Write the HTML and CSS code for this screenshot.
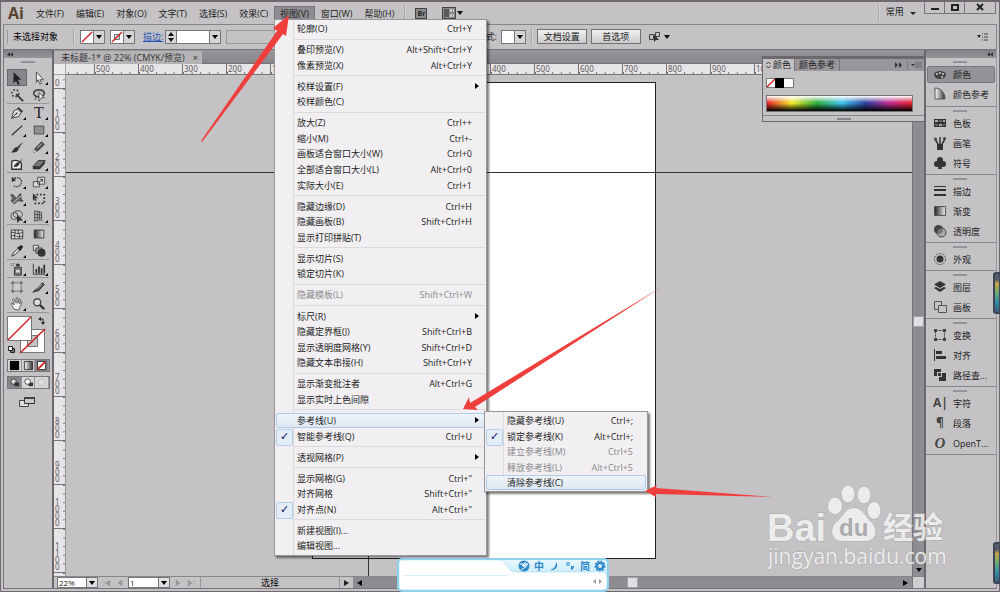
FILE: index.html
```html
<!DOCTYPE html>
<html lang="zh-CN">
<head>
    <meta charset="UTF-8">
    <meta name="viewport" content="width=device-width, initial-scale=1.0">
    <title>未标题-1* @ 22% (CMYK/预览)</title>
    <link rel="stylesheet" href="styles.css">
</head>
<body>
    <div class="app">
        <header class="menubar">
            <div class="logo">Ai</div>
            <nav class="menus">
                <button>文件(F)</button>
                <button>编辑(E)</button>
                <button>对象(O)</button>
                <button>文字(T)</button>
                <button>选择(S)</button>
                <button>效果(C)</button>
                <button class="open">视图(V)</button>
                <button>窗口(W)</button>
                <button>帮助(H)</button>
            </nav>
            <span class="divider"></span>
            <button class="bridge">Br</button>
            <button class="arrange" aria-label="排列文档">
                <svg width="21" height="12" viewBox="0 0 21 12"><rect x="0.5" y="0.5" width="13" height="11" fill="#8b898c" stroke="#444"/><path d="M2 2h5v8H2z" fill="#5b595c"/><path d="M8 2h2v3H8zM11 2h1v3h-1zM8 7h2v3H8zM11 7h1v3h-1z" fill="#ccc"/><path d="M15 4h6l-3 4z" fill="#111"/></svg>
            </button>
            <div class="spacer"></div>
            <span class="divider"></span>
            <button class="workspace">常用 <i class="caret"></i></button>
            <div class="window-buttons">
                <button aria-label="最小化"><svg width="10" height="10" viewBox="0 0 10 10"><path d="M1 6h8v2H1z" fill="#222"/></svg></button>
                <button aria-label="最大化"><svg width="10" height="10" viewBox="0 0 10 10"><path d="M2 3h6v5H2z" fill="none" stroke="#222" stroke-width="2"/></svg></button>
                <button class="close" aria-label="关闭"><svg width="10" height="10" viewBox="0 0 10 10"><path d="M2 2l6 6M8 2l-6 6" stroke="#222" stroke-width="2"/></svg></button>
            </div>
        </header>

        <section class="control-bar">
            <span class="grip-v"></span>
            <span class="status">未选择对象</span>
            <span class="divider"></span>
            <button class="swatch-combo" aria-label="填色"><svg width="12" height="12" viewBox="0 0 12 12"><path d="M0 0h12v12H0z" fill="#fff"/><path d="M1 11L11 1" stroke="#c22" stroke-width="1.5"/></svg><i class="drop"></i></button>
            <button class="swatch-combo" aria-label="描色"><svg width="12" height="12" viewBox="0 0 12 12"><path d="M0 0h12v12H0z" fill="#fff"/><path d="M3.500 3.500h5v5h-5z" fill="#ddd" stroke="#777"/><path d="M1 11L11 1" stroke="#c22" stroke-width="1.500"/></svg><i class="drop"></i></button>
            <a href="#" class="stroke-link">描边:</a>
            <div class="stepper">
                <button class="step" aria-label="增减"><svg width="10" height="12" viewBox="0 0 10 12"><path d="M5 1l3 4H2zM5 11l3-4H2z" fill="#111"/></svg></button>
                <input type="text" aria-label="描边粗细">
                <i class="drop"></i>
            </div>
            <input type="text" class="profile" aria-label="画笔定义" disabled>
            <span class="style-label">样式:</span>
            <button class="swatch-combo style-combo" aria-label="图形样式"><svg width="12" height="12" viewBox="0 0 12 12"><path d="M0 0h12v12H0z" fill="#fff"/></svg><i class="drop"></i></button>
            <span class="divider"></span>
            <button class="push">文档设置</button>
            <button class="push">首选项</button>
            <button class="similar" aria-label="选择类似的对象">
                <svg width="22" height="12" viewBox="0 0 22 12"><path d="M1.500 3.500h4v5h-4zM7.500 1.500h4v4h-4z" fill="none" stroke="#444"/><path d="M6 3l5 6-3 0-2 2z" fill="#333"/><path d="M16 4h6l-3 4z" fill="#111"/></svg>
            </button>
            <div class="spacer"></div>
            <button class="flyout" aria-label="面板菜单"><svg width="11" height="8" viewBox="0 0 11 8"><path d="M0 2h4L2 5z" fill="#222"/><path d="M5 1h1M7 1h4M5 4h1M7 4h4M5 7h1M7 7h4" stroke="#444"/></svg></button>
        </section>

        <main class="workspace-area">
            <aside class="tools">
                <div class="dock-head left"><svg width="6" height="5" viewBox="0 0 8 6"><path d="M4 0v6L0 3zM8 0v6L4 3z" fill="#333"/></svg></div>
                <span class="grip"></span>
                <div class="tool-group">
                    <button class="active" aria-label="选择工具"><svg viewBox="0 0 16 16"><path d="M4 1l9 9H9l2 5-2 1-2-5-3 3z" fill="#222"/></svg></button>
                    <button class="more" aria-label="直接选择工具"><svg viewBox="0 0 16 16"><path d="M5 1l8 9H9l2 4-2 1-2-5-2 3z" fill="#eee" stroke="#444"/></svg></button>
                    <button aria-label="魔棒工具"><svg viewBox="0 0 16 16"><circle cx="6" cy="6" r="4" fill="none" stroke="#444" stroke-width="2" stroke-dasharray="2 2"/><path d="M7 7l8 8" stroke="#333" stroke-width="2"/></svg></button>
                    <button aria-label="套索工具"><svg viewBox="0 0 16 16"><ellipse cx="8" cy="6" rx="6" ry="4" fill="none" stroke="#444" stroke-width="2"/><path d="M3 9c2 1 2 3 0 5" fill="none" stroke="#444"/><path d="M8 5l6 6-3 0-3 4z" fill="#eee" stroke="#444"/></svg></button>
                </div>
                <div class="tool-group">
                    <button class="more" aria-label="钢笔工具"><svg viewBox="0 0 16 16"><path d="M2 14l2-8 5-3 4 4-3 5z" fill="#ddd" stroke="#333"/><path d="M2 14l5-5" stroke="#333"/><circle cx="7.500" cy="8.500" r="1" fill="#333"/><path d="M10 1l5 5-2 2-5-5z" fill="#444"/></svg></button>
                    <button class="more type" aria-label="文字工具">T</button>
                    <button class="more" aria-label="直线段工具"><svg viewBox="0 0 16 16"><path d="M2 14L14 3" stroke="#333" stroke-width="1.500"/></svg></button>
                    <button class="more" aria-label="矩形工具"><svg viewBox="0 0 16 16"><path d="M2.500 3.500h11v9h-11z" fill="#929094" stroke="#444"/></svg></button>
                    <button aria-label="画笔工具"><svg viewBox="0 0 16 16"><path d="M15 2L8 8l2 2z" fill="#444"/><path d="M8 8l2 2c-1 4-5 5-9 4 3-1 3-6 7-6z" fill="#333"/></svg></button>
                    <button class="more" aria-label="铅笔工具"><svg viewBox="0 0 16 16"><path d="M2 14l2-5 7-7 3 3-7 7z" fill="#555" stroke="#333"/><path d="M6 9l5-5" stroke="#ccc"/><path d="M2 14l1-3 2 2z" fill="#eee"/></svg></button>
                    <button aria-label="斑点画笔工具"><svg viewBox="0 0 16 16"><path d="M2 5c3-2 9-1 11 2v7H2z" fill="#eee" stroke="#333" stroke-width="1.500"/><path d="M15 1l-5 5c-3 0-4 2-6 5 4 1 6-1 7-4z" fill="#333"/></svg></button>
                    <button class="more" aria-label="橡皮擦工具"><svg viewBox="0 0 16 16"><path d="M1 11l6-7h8l-6 7z" fill="#777" stroke="#333"/><path d="M1 11h8v3H1zM9 11l6-7v3l-6 7z" fill="#333"/></svg></button>
                </div>
                <div class="tool-group">
                    <button class="more" aria-label="旋转工具"><svg viewBox="0 0 16 16"><path d="M5 4c5-3 9 1 8 5s-6 6-9 3" fill="none" stroke="#444" stroke-width="1.500" stroke-dasharray="2 1"/><path d="M2 2v6l5-2z" fill="#333"/></svg></button>
                    <button class="more" aria-label="比例缩放工具"><svg viewBox="0 0 16 16"><path d="M1.500 7.500h7v6h-7zM6.500 2.500h8v8h-8z" fill="#ddd" stroke="#444"/><path d="M8 9l4-4M9 5h3v3" fill="none" stroke="#333"/></svg></button>
                    <button class="more" aria-label="宽度工具"><svg viewBox="0 0 16 16"><path d="M1 3c5 0 4 3 6 4s3-5 5-5-2 6 3 8c-3 2-4-1-6 0s-3 4-5 3-1-3-3-3c3-2 2-3 0-7z" fill="#666" stroke="#333"/><path d="M3 13L13 4" stroke="#ddd"/></svg></button>
                    <button aria-label="自由变换工具"><svg viewBox="0 0 16 16"><path d="M5 3h9v10H4V8" fill="none" stroke="#333" stroke-width="2" stroke-dasharray="2 2"/><path d="M1 1l6 6H4l-3 3z" fill="#333"/></svg></button>
                    <button class="more" aria-label="形状生成器工具"><svg viewBox="0 0 16 16"><circle cx="5" cy="8" r="4" fill="#ccc" stroke="#444"/><ellipse cx="9" cy="6" rx="5" ry="4" fill="none" stroke="#444"/><path d="M8 6l7 7h-4l-3 3z" fill="#333"/></svg></button>
                    <button class="more" aria-label="透视网格工具"><svg viewBox="0 0 16 16"><path d="M3 2v12M3 2l8 2v8l-8 2M3 6l8 1M3 10h8M6 3v10M8.500 3v10" fill="none" stroke="#444"/><path d="M11 12l4 2H4z" fill="#999"/></svg></button>
                </div>
                <div class="tool-group">
                    <button aria-label="网格工具"><svg viewBox="0 0 16 16"><path d="M1.500 3.500h13v10h-13z" fill="#ddd" stroke="#333"/><path d="M1 7c4-3 5 3 14-1M1 11c5-4 8 3 14-1M5 3c3 4-2 6 1 10M10 3c-3 4 4 6 0 10" fill="none" stroke="#333"/></svg></button>
                    <button aria-label="渐变工具"><svg viewBox="0 0 16 16"><defs><linearGradient id="g"><stop offset="0" stop-color="#222"/><stop offset="1" stop-color="#eee"/></linearGradient></defs><path d="M2.500 3.500h11v9h-11z" fill="url(#g)" stroke="#333"/></svg></button>
                    <button class="more" aria-label="吸管工具"><svg viewBox="0 0 16 16"><path d="M2 14l2-4 5-5 2 2-5 5z" fill="#ddd" stroke="#333"/><path d="M8 4l2-1 3-2 2 2-2 3-1 2z" fill="#222"/></svg></button>
                    <button aria-label="混合工具"><svg viewBox="0 0 16 16"><path d="M1.500 1.500h6v6h-6z" fill="#ddd" stroke="#444"/><path d="M4.500 4.500h7v6h-7z" fill="#999" stroke="#444"/><circle cx="11" cy="10" r="4.500" fill="#333"/></svg></button>
                </div>
                <div class="tool-group">
                    <button class="more" aria-label="符号喷枪工具"><svg viewBox="0 0 16 16"><path d="M5 6h8v9H5z" fill="#777" stroke="#333"/><path d="M7 2h4v3H7z" fill="#333"/><path d="M1 2h5M1 4h4" stroke="#555" stroke-dasharray="1 1"/><path d="M7 9h4v3H7z" fill="#ddd"/></svg></button>
                    <button class="more" aria-label="柱形图工具"><svg viewBox="0 0 16 16"><path d="M1.500 2v12H15" fill="none" stroke="#333"/><path d="M4 8h2v5H4zM7 5h2v8H7zM10 7h2v6h-2zM13 3h2v10h-2z" fill="#333"/></svg></button>
                </div>
                <div class="tool-group">
                    <button aria-label="画板工具"><svg viewBox="0 0 16 16"><path d="M3.500 1v14M12.500 1v14M1 3.500h14M1 12.500h14" stroke="#444"/><path d="M4 4h8v8H4z" fill="#ccc"/></svg></button>
                    <button class="more" aria-label="切片工具"><svg viewBox="0 0 16 16"><path d="M1 14L12 3l2 2-6 7z" fill="#555" stroke="#333"/><path d="M5 10l6-5" stroke="#ddd"/></svg></button>
                    <button class="more" aria-label="抓手工具"><svg viewBox="0 0 16 16"><path d="M5 14L1 8l1-1 3 2-2-6 1-1 3 5V1h2v6l2-5 1 1-1 5 2-3 1 1-3 6-1 3z" fill="#eee" stroke="#555"/></svg></button>
                    <button aria-label="缩放工具"><svg viewBox="0 0 16 16"><circle cx="6" cy="6" r="4" fill="#ddd" stroke="#444" stroke-width="1.500"/><path d="M9 9l5 5" stroke="#333" stroke-width="2.500"/></svg></button>
                </div>
                <svg class="fill-stroke" width="40" height="39" viewBox="0 0 40 39">
                    <path d="M13.500 13.500h24v23h-24z" fill="#fff" stroke="#777"/><path d="M20.500 19.500h10v11h-10z" fill="#c4c2c5" stroke="#777"/><path d="M13 37L38 13" stroke="#c22" stroke-width="1.500"/>
                    <path d="M.500.500h24v24H.500z" fill="#fff" stroke="#777"/><path d="M1 24L24 1" stroke="#c22" stroke-width="1.500"/>
                    <path d="M33 3h3v4" fill="none" stroke="#222"/><path d="M34 1v4l-3-2zM34 6h4l-2 3z" fill="#222"/>
                    <path d="M3.500 32.500h4v4h-4z" fill="#777" stroke="#222"/><path d="M1.500 30.500h4v4h-4z" fill="#fff" stroke="#222"/>
                </svg>
                <div class="mode-row">
                    <button aria-label="颜色"><svg viewBox="0 0 12 12"><path d="M1 1h10v10H1z" fill="#000"/></svg></button>
                    <button aria-label="渐变"><svg viewBox="0 0 12 12"><defs><linearGradient id="g2"><stop offset="0" stop-color="#fff"/><stop offset="1" stop-color="#333"/></linearGradient></defs><path d="M1.500 1.500h9v9h-9z" fill="url(#g2)" stroke="#333"/></svg></button>
                    <button class="active" aria-label="无"><svg viewBox="0 0 12 12"><path d="M1.500 1.500h9v9h-9z" fill="#fff" stroke="#222"/><path d="M2 10l8-8" stroke="#c22" stroke-width="2"/></svg></button>
                </div>
                <div class="mode-row draw">
                    <button class="active" aria-label="正常绘图"><svg viewBox="0 0 12 12"><circle cx="5" cy="5" r="3" fill="#ddd" stroke="#333"/><path d="M6 6h5v4H6z" fill="#333"/></svg></button>
                    <button aria-label="背面绘图"><svg viewBox="0 0 12 12"><path d="M6 6h5v4H6z" fill="#333"/><circle cx="5" cy="5" r="3" fill="#fff" stroke="#444"/></svg></button>
                    <button aria-label="内部绘图" disabled><svg viewBox="0 0 12 12"><circle cx="6" cy="6" r="3.500" fill="#ddd" stroke="#aaa" stroke-dasharray="2 1"/></svg></button>
                </div>
                <button class="screen-mode" aria-label="更改屏幕模式"><svg width="16" height="12" viewBox="0 0 16 12"><path d="M.500 4.500h9v6h-9z" fill="#ddd" stroke="#444"/><path d="M5.500 1.500h10v6h-10z" fill="#ccc" stroke="#333"/><path d="M5 1h11v2H5z" fill="#444"/></svg></button>
            </aside>

            <section class="document">
                <div class="tabs">
                    <div class="tab">未标题-1* @ 22% (CMYK/预览)<button aria-label="关闭标签">×</button></div>
                </div>
                <div class="doc-grid">
                    <div class="ruler-corner"></div>
                    <div class="ruler-h"><div class="strip" id="rulerH"></div></div>
                    <div class="ruler-v"><div class="strip" id="rulerV"></div></div>
                    <div class="canvas">
                        <div class="artboard"></div>
                        <div class="guide horizontal"></div>
                        <div class="guide vertical"></div>
                    </div>
                    <div class="scroll-v"><span class="thumb"></span><svg width="8" height="5" viewBox="0 0 8 5"><path d="M1 0h6L4 4z" fill="#000"/></svg></div>
                </div>
                <footer class="status-bar">
                    <span class="combo zoom-box"><select aria-label="缩放"><option>22%</option></select></span>
                    <svg class="pager" width="20" height="6" viewBox="0 0 20 6"><path d="M1 0v6M7 0v6L2 3zM19 0v6l-4-3z" fill="#98969a" stroke="#98969a" stroke-width=".500"/></svg>
                    <span class="combo page-box"><select aria-label="画板"><option>1</option></select></span>
                    <svg class="pager" width="20" height="6" viewBox="0 0 20 6"><path d="M1 0v6l4-3zM13 0v6l4-3zM19 0v6" fill="#98969a" stroke="#98969a" stroke-width=".500"/></svg>
                    <span class="tool-name">选择</span>
                    <button class="status-more" aria-label="状态菜单"><svg width="5" height="6" viewBox="0 0 5 6"><path d="M0 0v6l5-3z" fill="#222"/></svg></button>
                    <div class="scroll-h">
                        <svg width="5" height="8" viewBox="0 0 5 8"><path d="M5 1v6L0 4z" fill="#000"/></svg>
                        <span class="thumb"></span>
                        <svg width="5" height="8" viewBox="0 0 5 8"><path d="M0 1v6l5-3z" fill="#000"/></svg>
                    </div>
                    <span class="corner"></span>
                </footer>
            </section>

            <aside class="dock">
                <div class="dock-head"><svg width="6" height="5" viewBox="0 0 8 6"><path d="M4 0v6L0 3zM8 0v6L4 3z" fill="#333"/></svg></div>
                <div class="dock-group first">
                    <button class="active"><svg viewBox="0 0 14 14"><ellipse cx="7" cy="7" rx="6" ry="4" fill="#444"/><circle cx="4" cy="6" r="1" fill="#ccc"/><circle cx="7" cy="5" r="1" fill="#ccc"/><circle cx="10" cy="6" r="1" fill="#ccc"/><circle cx="9" cy="9" r="1" fill="#ccc"/></svg>颜色</button>
                    <button><svg viewBox="0 0 14 14"><path d="M2 1c6 0 10 5 10 11H2z" fill="url(#g2)" stroke="#555"/></svg>颜色参考</button>
                </div>
                <div class="dock-group">
                    <button><svg viewBox="0 0 14 14"><path d="M1 3h12v8H1z" fill="#333"/><path d="M2 4h3v2H2zM10 4h2v2h-2zM6 8h3v2H6z" fill="#aaa"/><path d="M6 4h3v2H6zM2 8h3v2H2zM10 8h2v2h-2z" fill="#666"/></svg>色板</button>
                    <button><svg viewBox="0 0 14 14"><path d="M4 8h6v6H4z" fill="#333"/><path d="M5 8L2 3M7 8V1M9 8l3-5" stroke="#333" stroke-width="1.500"/><circle cx="2.500" cy="3" r="1.500" fill="#444"/><circle cx="11.500" cy="2.500" r="1.500" fill="#444"/></svg>画笔</button>
                    <button><svg viewBox="0 0 14 14"><circle cx="7" cy="4" r="3" fill="#333"/><circle cx="4" cy="8" r="3" fill="#333"/><circle cx="10" cy="8" r="3" fill="#333"/><path d="M6 7h2l1 6H5z" fill="#333"/></svg>符号</button>
                </div>
                <div class="dock-group">
                    <button><svg viewBox="0 0 14 14"><path d="M1 2.500h12" stroke="#333"/><path d="M1 6h12" stroke="#333" stroke-width="2"/><path d="M1 11h12" stroke="#333" stroke-width="2"/></svg>描边</button>
                    <button><svg viewBox="0 0 14 14"><path d="M1.500 2.500h11v9h-11z" fill="url(#g)" stroke="#555"/></svg>渐变</button>
                    <button><svg viewBox="0 0 14 14"><circle cx="5.500" cy="5.500" r="4.500" fill="#444"/><circle cx="8.500" cy="8.500" r="4.500" fill="#999" fill-opacity=".6" stroke="#444"/></svg>透明度</button>
                </div>
                <div class="dock-group">
                    <button><svg viewBox="0 0 14 14"><circle cx="7" cy="7" r="5.500" fill="none" stroke="#555" stroke-dasharray="2 1"/><circle cx="7" cy="7" r="3.500" fill="#333"/></svg>外观</button>
                </div>
                <div class="dock-group">
                    <button><svg viewBox="0 0 14 14"><path d="M7 1l6 3.500L7 8 1 4.500z" fill="#333"/><path d="M1 8l2-1 4 2 4-2 2 1-6 4z" fill="#333"/></svg>图层</button>
                    <button><svg viewBox="0 0 14 14"><path d="M1.500 1.500h7v8h-7z" fill="none" stroke="#555"/><path d="M5.500 5.500h8v7h-8z" fill="#c4c2c5" stroke="#555"/></svg>画板</button>
                </div>
                <div class="dock-group">
                    <button><svg viewBox="0 0 14 14"><path d="M2.500 2.500h9v9h-9z" fill="none" stroke="#444" stroke-dasharray="2 1"/><path d="M1 1h3v3H1zM10 1h3v3h-3zM1 10h3v3H1zM10 10h3v3h-3z" fill="#444"/></svg>变换</button>
                    <button><svg viewBox="0 0 14 14"><path d="M1.500 1v12" stroke="#333"/><path d="M3 3h6v3H3zM3 8h10v3H3z" fill="#333"/></svg>对齐</button>
                    <button><svg viewBox="0 0 14 14"><path d="M1 1h7v3H4v4H1zM5 5h3v3H5zM9 5h4v8H6V9h3z" fill="#333"/></svg>路径查...</button>
                </div>
                <div class="dock-group last">
                    <button><span class="glyph">A|</span>字符</button>
                    <button><span class="glyph">¶</span>段落</button>
                    <button><span class="glyph italic">O</span>OpenT...</button>
                </div>
            </aside>
        </main>
    </div>

    <section class="color-panel">
        <div class="panel-tabs">
            <button class="current"><svg width="5" height="8" viewBox="0 0 5 8"><path d="M.500 3l2-2 2 2M.500 5l2 2 2-2" fill="none" stroke="#333"/></svg>颜色</button>
            <button>颜色参考</button>
            <svg class="panel-icons" width="27" height="8" viewBox="0 0 27 8"><path d="M0 1v6l3-3zM4 1v6l3-3z" fill="#333"/><path d="M12.500 0v8" stroke="#777"/><path d="M16 3h4l-2 2z" fill="#333"/><path d="M20 2h7M20 4h7M20 6h7" stroke="#666"/></svg>
        </div>
        <div class="panel-body">
            <svg width="28" height="10" viewBox="0 0 28 10"><path d="M.500.500h27v9H.500z" fill="#fff" stroke="#777"/><path d="M1 9l8-8" stroke="#c22" stroke-width="1.500"/><path d="M9 0h9v10H9z" fill="#000"/></svg>
            <div class="spectrum"></div>
        </div>
        <div class="panel-foot"></div>
    </section>

    <ul class="popup view-menu">
        <li><button>轮廓(O)<kbd>Ctrl+Y</kbd></button></li>
        <li class="sep"></li>
        <li><button>叠印预览(V)<kbd>Alt+Shift+Ctrl+Y</kbd></button></li>
        <li><button>像素预览(X)<kbd>Alt+Ctrl+Y</kbd></button></li>
        <li class="sep"></li>
        <li class="parent"><button>校样设置(F)</button></li>
        <li><button>校样颜色(C)</button></li>
        <li class="sep"></li>
        <li><button>放大(Z)<kbd>Ctrl++</kbd></button></li>
        <li><button>缩小(M)<kbd>Ctrl+-</kbd></button></li>
        <li><button>画板适合窗口大小(W)<kbd>Ctrl+0</kbd></button></li>
        <li><button>全部适合窗口大小(L)<kbd>Alt+Ctrl+0</kbd></button></li>
        <li><button>实际大小(E)<kbd>Ctrl+1</kbd></button></li>
        <li class="sep"></li>
        <li><button>隐藏边缘(D)<kbd>Ctrl+H</kbd></button></li>
        <li><button>隐藏画板(B)<kbd>Shift+Ctrl+H</kbd></button></li>
        <li><button>显示打印拼贴(T)</button></li>
        <li class="sep"></li>
        <li><button>显示切片(S)</button></li>
        <li><button>锁定切片(K)</button></li>
        <li class="sep"></li>
        <li><button disabled>隐藏模板(L)<kbd>Shift+Ctrl+W</kbd></button></li>
        <li class="sep"></li>
        <li class="parent"><button>标尺(R)</button></li>
        <li><button>隐藏定界框(J)<kbd>Shift+Ctrl+B</kbd></button></li>
        <li><button>显示透明度网格(Y)<kbd>Shift+Ctrl+D</kbd></button></li>
        <li><button>隐藏文本串接(H)<kbd>Shift+Ctrl+Y</kbd></button></li>
        <li class="sep"></li>
        <li><button>显示渐变批注者<kbd>Alt+Ctrl+G</kbd></button></li>
        <li><button>显示实时上色间隙</button></li>
        <li class="sep"></li>
        <li class="parent hover"><button>参考线(U)</button></li>
        <li class="checked"><button>智能参考线(Q)<kbd>Ctrl+U</kbd></button></li>
        <li class="sep"></li>
        <li class="parent"><button>透视网格(P)</button></li>
        <li class="sep"></li>
        <li><button>显示网格(G)<kbd>Ctrl+"</kbd></button></li>
        <li><button>对齐网格<kbd>Shift+Ctrl+"</kbd></button></li>
        <li class="checked"><button>对齐点(N)<kbd>Alt+Ctrl+"</kbd></button></li>
        <li class="sep"></li>
        <li><button>新建视图(I)...</button></li>
        <li><button>编辑视图...</button></li>
    </ul>

    <ul class="popup guide-menu">
        <li><button>隐藏参考线(U)<kbd>Ctrl+;</kbd></button></li>
        <li class="checked"><button>锁定参考线(K)<kbd>Alt+Ctrl+;</kbd></button></li>
        <li><button disabled>建立参考线(M)<kbd>Ctrl+5</kbd></button></li>
        <li><button disabled>释放参考线(L)<kbd>Alt+Ctrl+5</kbd></button></li>
        <li class="hover"><button>清除参考线(C)</button></li>
    </ul>

    <div class="ime">
        <svg class="ime-shape" width="212" height="34" viewBox="0 0 212 34">
            <defs><linearGradient id="sky" x2="0" y2="1"><stop offset="0" stop-color="#eaf8ff"/><stop offset="1" stop-color="#a5dcf8"/></linearGradient></defs>
            <rect x="1" y="1" width="210" height="32" rx="4" fill="url(#sky)" stroke="#8fd0ec" stroke-width="2"/>
            <path d="M2 5q0-3 3-3h97c8 0 8 12 16 12h88q4 0 4 4v10q0 4-4 4H5q-3 0-3-3z" fill="#fff" stroke="#9bd3ee" stroke-width=".500"/>
            <path d="M6 17.500h105" stroke="#d9effa"/>
            <path d="M199 21v5l-3-2.500zM202 21v5l3-2.500z" fill="#999"/>
        </svg>
        <div class="ime-tools">
            <svg viewBox="0 0 12 12"><circle cx="6" cy="6" r="5.500" fill="#2f88c9"/><path d="M2 4h8L5 6 9 6 3 10M8 2L4 6" fill="none" stroke="#fff"/></svg>
            <span>中</span>
            <svg viewBox="0 0 12 12"><path d="M8 2c3 4 0 9-6 8 4-1 6-4 6-8z" fill="#2f88c9"/></svg>
            <svg viewBox="0 0 12 12"><circle cx="4" cy="4" r="1.500" fill="none" stroke="#2f88c9"/><path d="M7 6h3q0 3-3 4z" fill="#2f88c9"/></svg>
            <span>简</span>
            <svg viewBox="0 0 12 12"><circle cx="6" cy="6" r="4.500" fill="none" stroke="#2f88c9" stroke-width="2" stroke-dasharray="2 1"/><circle cx="6" cy="6" r="3" fill="none" stroke="#2f88c9" stroke-width="2"/></svg>
        </div>
    </div>

    <span class="gadget upper"></span>
    <span class="gadget lower"></span>

    <svg class="watermark" width="190" height="92" viewBox="0 0 190 92">
        <g fill="#f4f4f4" stroke="#a9a7aa" stroke-width="1" paint-order="stroke">
            <text x="3" y="59" class="wm-name">Bai</text>
            <ellipse cx="71" cy="24" rx="7" ry="8.500"/>
            <ellipse cx="84" cy="12" rx="6.500" ry="8.500"/>
            <ellipse cx="100" cy="13" rx="6.500" ry="8.500"/>
            <ellipse cx="110" cy="28.500" rx="6.500" ry="8.500"/>
            <path d="M90 26c7 0 11 7 16 13 8 6 8 20-5 20H79c-13 0-14-14-5-20 5-5 8-13 16-13z"/>
            <text x="119" y="56" class="wm-cn">经验</text>
            <text x="4" y="82" class="wm-url">jingyan.baidu.com</text>
        </g>
        <text x="75" y="54" class="wm-du">du</text>
    </svg>

    <svg class="arrows" width="1000" height="592" viewBox="0 0 1000 592">
        <g fill="#ee3f3d">
            <path d="M201 141L277 31 273 28 289 15 286 36 283 34 202 142z"/>
            <path d="M663 286L470 403 469 397 463 409 478 410 475 407z"/>
            <path d="M773 497L656 488 657 485 645 491 656 497 656 494z"/>
        </g>
    </svg>

    <script>
        const rulerH = document.getElementById('rulerH');
        const rulerV = document.getElementById('rulerV');

        function addMark(strip, text) {
            const mark = document.createElement('span');
            mark.className = 'mark';
            mark.textContent = text;
            strip.appendChild(mark);
        }

        // the outermost marks only carry ticks
        addMark(rulerH, '');
        for (let v = -500; v <= 1000; v += 100) {
            addMark(rulerH, Math.abs(v));
        }
        for (let i = 0; i < 5; i++) {
            addMark(rulerH, '');
        }

        for (let v = 0; v <= 1100; v += 100) {
            addMark(rulerV, v);
        }
        addMark(rulerV, '');
    </script>
</body>
</html>
```

FILE: styles.css
```css
* {
    box-sizing: border-box;
}
body {
    margin: 0;
    height: 100vh;
    overflow: hidden;
    position: relative;
    background: #c4c2c5;
    color: #222;
    font: 9px/15px "Open Sans", "Noto Sans CJK SC", sans-serif;
}
button, input, select {
    font: inherit;
    color: inherit;
    margin: 0;
    padding: 0;
    border: none;
    border-radius: 0;
    background: none;
}
button {
    white-space: nowrap;
}
svg {
    display: block;
    flex: none;
}
.spacer {
    flex: 1;
}
.divider {
    width: 2px;
    align-self: stretch;
    margin: 3px 0;
    border-left: 1px solid #a9a7aa;
    border-right: 1px solid #d2d0d3;
}
.app {
    height: 100vh;
    display: flex;
    flex-direction: column;
    border: 1px solid #6f696f;
    border-width: 2px 1px 1px;
    padding: 0 2px 2px;
}

/* menu bar */
.menubar {
    height: 22px;
    flex: none;
    display: flex;
    align-items: center;
}
.logo {
    width: 27px;
    padding-left: 5px;
    font: bold 16px/20px "Open Sans", sans-serif;
    color: #5b4330;
}
.menus {
    display: flex;
    align-items: center;
}
.menus button {
    height: 14px;
    line-height: 11px;
    padding: 0 5px;
    border: 1px solid transparent;
}
.menus .open {
    background: #8e8c90;
    border-color: #757377;
}
.menubar > .divider {
    margin-left: 4px;
}
.bridge {
    width: 12px;
    height: 11px;
    margin: 0 15px 0 9px;
    font-size: 7px;
    line-height: 9px;
    font-weight: bold;
    border: 1px solid #444;
    background: #8b898c;
}
.workspace {
    padding: 0 8px 3px 6px;
}
.caret {
    display: inline-block;
    border: 3px solid transparent;
    border-top-color: #222;
    border-bottom: none;
    margin-left: 4px;
}
.window-buttons {
    display: flex;
    align-self: flex-start;
    margin-right: 1px;
}
.window-buttons button {
    width: 20px;
    height: 12px;
    display: flex;
    justify-content: center;
    border: 1px solid #77757a;
    border-top: none;
    border-right: none;
}
.window-buttons .close {
    width: 32px;
    border-right: 1px solid #77757a;
}

/* control bar */
.control-bar {
    height: 25px;
    flex: none;
    display: flex;
    align-items: center;
    border: 1px solid #868488;
    border-bottom: none;
    padding: 0 8px 1px 3px;
}
.grip-v {
    width: 2px;
    height: 14px;
    border-left: 1px solid #999;
    margin-right: 4px;
}
.status {
    width: 60px;
    color: #000;
}
.swatch-combo {
    display: flex;
    height: 14px;
    margin-left: 5px;
    border: 1px solid #77757a;
    background: #fff;
}
.drop {
    width: 11px;
    height: 12px;
    border-left: 1px solid #77757a;
    background: #d6d4d7;
    display: flex;
    justify-content: center;
    align-items: center;
}
.drop::after, .combo::after {
    content: "";
    border: 3px solid transparent;
    border-top: 4px solid #000;
    border-bottom: none;
}
.stroke-link {
    color: #2456b4;
    margin: 0 2px 0 8px;
}
.stepper {
    display: flex;
    height: 14px;
    border: 1px solid #77757a;
    background: #d6d4d7;
}
.stepper input {
    width: 33px;
    background: #fff;
    border-left: 1px solid #77757a;
}
.profile {
    flex: 0 0 242px;
    height: 14px;
    margin-left: 5px;
    border: 1px solid #99979b;
}
.style-label {
    margin-left: 8px;
}
.control-bar .style-combo {
    margin: 0 5px 0 4px;
}
.push {
    width: 50px;
    height: 15px;
    line-height: 12px;
    margin-left: 4px;
    border: 1px solid #737175;
    background: linear-gradient(#f0eff1, #cccacd);
}
.similar {
    margin-left: 7px;
}

/* main area */
.workspace-area {
    flex: 1;
    min-height: 0;
    display: flex;
    border: 1px solid #77757a;
    border-right-color: #97959a;
}
.dock-head {
    height: 8px;
    display: flex;
    align-items: center;
    justify-content: flex-end;
    padding: 0 3px;
    background: linear-gradient(#818084, #98969a);
}
.dock-head.left {
    justify-content: flex-start;
}
.tools {
    width: 50px;
    flex: none;
    border-right: 2px solid #6b696d;
}
.tools .dock-head {
    margin-bottom: 3px;
}
.grip {
    display: block;
    width: 14px;
    height: 2px;
    margin: 0 auto 6px 17px;
    background: #949296;
}
.tool-group {
    display: grid;
    grid-template-columns: 20px 20px;
    column-gap: 2px;
    margin: 0 3px;
    border-bottom: 1px solid #98969a;
}
.tool-group button {
    height: 17px;
    display: flex;
    justify-content: center;
    align-items: center;
    position: relative;
}
.tool-group svg {
    width: 14px;
    height: 14px;
}
.tool-group .active {
    background: #88868a;
    border: 1px solid #68666a;
}
.tool-group .more::after {
    content: "";
    position: absolute;
    right: 1px;
    bottom: 1px;
    border-left: 3px solid transparent;
    border-bottom: 3px solid #000;
}
.tool-group .type {
    font: 16px/16px "Liberation Serif", serif;
}
.fill-stroke {
    margin: 3px 0 4px 3px;
}
.mode-row {
    display: flex;
    width: 43px;
    margin: 0 0 4px 3px;
    border: 1px solid #77757a;
    background: #d6d4d7;
}
.mode-row button {
    flex: 1;
    height: 11px;
    display: flex;
    justify-content: center;
    align-items: center;
    border-right: 1px solid #98969a;
}
.mode-row svg {
    width: 11px;
    height: 11px;
}
.mode-row .active {
    background: #88868a;
}
.screen-mode {
    display: block;
    margin: 7px auto 0 15px;
}

/* document */
.document {
    flex: 1;
    min-width: 0;
    display: flex;
    flex-direction: column;
}
.tabs {
    height: 14px;
    flex: none;
    background: linear-gradient(#98969a, #88868a);
    border-bottom: 1px solid #77757a;
}
.tab {
    display: inline-block;
    height: 13px;
    line-height: 13px;
    padding: 0 4px 0 7px;
    background: #b5b3b6;
    color: #333;
}
.tab button {
    line-height: 12px;
    margin-left: 8px;
}
.doc-grid {
    flex: 1;
    min-height: 0;
    display: grid;
    grid-template: 11px 1fr / 12px 1fr 12px;
}
.ruler-corner {
    background: #eceaed;
    border-right: 1px solid #a5a3a7;
    border-bottom: 1px solid #a5a3a7;
}
.ruler-h, .ruler-v {
    overflow: hidden;
    background: #e6e4e7;
    color: #5f5d61;
    font: 8px/7px "Noto Sans", sans-serif;
}
.ruler-h {
    grid-column: 2 / 4;
    border-bottom: 1px solid #77757a;
}
.ruler-v {
    border-right: 1px solid #99979b;
}
.ruler-h .strip {
    display: flex;
    height: 10px;
    margin-left: -16px;
}
.ruler-v .strip {
    margin-top: -30px;
}
.ruler-h .mark {
    flex: 0 0 44px;
    padding: 1px 0 0 1px;
    border-left: 1px solid #77757a;
    background: linear-gradient(90deg, #77757a 1px, transparent 1px) 0 100% / 20% 2px repeat-x;
}
.ruler-v .mark {
    height: 44px;
    padding: 0 5px 2px 1px;
    display: flex;
    align-items: flex-end;
    word-break: break-all;
    border-bottom: 1px solid #77757a;
    background: linear-gradient(#77757a 1px, transparent 1px) 100% 0 / 2px 20% repeat-y;
}
.canvas {
    position: relative;
    overflow: hidden;
}
.artboard {
    position: absolute;
    left: 246px;
    top: 7px;
    width: 344px;
    height: 477px;
    background: #fff;
    border: 1px solid #222;
}
.guide {
    position: absolute;
    background: #333;
}
.guide.horizontal {
    left: 0;
    right: 0;
    top: 97px;
    height: 1px;
}
.guide.vertical {
    top: 0;
    bottom: 0;
    left: 302px;
    width: 1px;
}
.scroll-v {
    display: flex;
    flex-direction: column;
    justify-content: space-between;
    align-items: center;
    padding: 241px 0 3px;
    background: #8e8c90;
    border-left: 1px solid #77757a;
}
.thumb {
    width: 11px;
    height: 11px;
    background: #e0dee1;
    border: 1px solid #a5a3a7;
}
.status-bar {
    height: 12px;
    flex: none;
    display: flex;
    align-items: center;
    border-top: 1px solid #88868a;
    line-height: 11px;
}
.combo {
    display: flex;
    align-items: center;
    height: 11px;
    border: 1px solid #77757a;
    background: #e0dee1;
    padding-right: 2px;
}
.combo select {
    appearance: none;
    height: 9px;
    line-height: 9px;
    background: #fff;
    padding-left: 1px;
    margin-right: 2px;
    font-size: 8px;
    border-right: 1px solid #77757a;
}
.zoom-box {
    margin-left: 3px;
}
.zoom-box select {
    width: 29px;
}
.page-box select {
    width: 30px;
}
.pager {
    margin: 0 5px;
}
.tool-name {
    flex: 0 0 140px;
    text-align: center;
    color: #000;
    border-left: 1px solid #99979b;
    border-right: 1px solid #99979b;
}
.status-more {
    padding: 0 4px;
}
.scroll-h {
    flex: 1;
    height: 11px;
    display: flex;
    align-items: center;
    justify-content: space-between;
    padding: 0 4px;
    background: #8e8c90;
}
.corner {
    width: 12px;
    height: 11px;
    border-left: 1px solid #77757a;
    background: #d0ced1;
}

/* right dock */
.dock {
    width: 72px;
    flex: none;
    border-left: 2px solid #6b696d;
}
.dock-group {
    padding: 6px 1px 1px;
    border-bottom: 1px solid #88868a;
    background: linear-gradient(#949296, #949296) 27px 3px / 14px 2px no-repeat;
}
.dock-group.first {
    padding-bottom: 2px;
}
.dock-group button {
    width: 100%;
    height: 20px;
    display: flex;
    align-items: center;
    gap: 6px;
    padding: 0 6px;
}
.dock-group .active {
    height: 17px;
    margin: 2px 0 1px;
    padding: 0 5px;
    background: #959397;
    border: 1px solid #77757a;
    border-radius: 2px;
}
.dock-group svg {
    width: 14px;
    height: 14px;
}
.glyph {
    width: 14px;
    text-align: center;
    font: bold 12px/16px "Open Sans", sans-serif;
    color: #444;
}
.glyph.italic {
    font: italic bold 15px/16px "Liberation Serif", serif;
}

/* floating color panel */
.color-panel {
    position: absolute;
    right: 75px;
    top: 56px;
    width: 163px;
    border: 1px solid #6b696d;
    border-top-width: 3px;
    background: #c4c2c5;
}
.panel-tabs {
    display: flex;
    align-items: center;
    height: 12px;
    background: #98969a;
}
.panel-tabs button {
    height: 12px;
    line-height: 12px;
    padding: 0 4px;
    border-right: 1px solid #77757a;
}
.panel-tabs .current {
    display: flex;
    align-items: center;
    gap: 2px;
    padding: 0 3px;
    background: #c4c2c5;
}
.panel-icons {
    margin: 0 2px 0 auto;
}
.panel-body {
    padding: 7px 11px 3px 3px;
}
.spectrum {
    height: 17px;
    margin-top: 7px;
    border: 1px solid #77757a;
    background:
        linear-gradient(#fff, rgba(255,255,255,0) 45%, rgba(0,0,0,0) 50%, #000),
        linear-gradient(90deg, #e5202b, #f5e92a 17%, #2fab3c 34%, #3cc0ea 52%, #2a3f9d 68%, #c22b8e 85%, #e5202b);
}
.panel-foot {
    height: 6px;
    border-top: 1px solid #88868a;
    background: linear-gradient(#88868a, #88868a) 50% 2px / 14px 2px no-repeat;
}

/* popup menus */
.popup {
    position: absolute;
    list-style: none;
    margin: 0;
    padding: 1px;
    display: flex;
    flex-direction: column;
    justify-content: space-between;
    border: 1px solid #98969a;
    background: linear-gradient(#dcdadd, #dcdadd) 18px 0 / 1px 100% no-repeat #f1eff2;
    box-shadow: 2px 2px 2px rgba(0,0,0,0.5);
    color: #1c1c1c;
}
.view-menu {
    left: 274px;
    top: 19px;
    width: 213px;
    min-height: 537px;
}
.guide-menu {
    left: 484px;
    top: 411px;
    width: 164px;
    min-height: 81px;
}
.popup li {
    height: 15px;
    position: relative;
}
.popup button {
    width: 100%;
    height: 15px;
    line-height: 13px;
    display: flex;
    justify-content: space-between;
    padding: 0 12px 0 20px;
    border: 1px solid transparent;
    border-radius: 2px;
}
.popup kbd {
    font: inherit;
}
.popup button:disabled {
    color: #8b898c;
}
.popup .sep {
    height: 5px;
    margin-left: 18px;
    background: linear-gradient(#dcdadd, #dcdadd) 0 2px / 100% 1px no-repeat;
}
.popup .hover button {
    border-color: #aecbe8;
    background: linear-gradient(#eff4fa, #dde8f4);
}
.popup .checked::before {
    content: "✓";
    position: absolute;
    left: 0;
    top: 0;
    width: 15px;
    height: 15px;
    border: 1px solid #b5cfe9;
    border-radius: 2px;
    background: #e3edf7;
    color: #0c1270;
    font: bold 11px/13px "DejaVu Sans", sans-serif;
    text-align: center;
}
.popup .parent::after {
    content: "";
    position: absolute;
    right: 6px;
    top: 4px;
    border: 3px solid transparent;
    border-left: 4px solid #000;
    border-right: none;
}

/* input method bar */
.ime {
    position: absolute;
    left: 397px;
    bottom: 0;
}
.ime-tools {
    position: absolute;
    right: 3px;
    top: 2px;
    display: flex;
    align-items: center;
    gap: 4px;
    color: #2f88c9;
    font-weight: bold;
    font-size: 10px;
    line-height: 12px;
}
.ime-tools svg {
    width: 12px;
    height: 12px;
}

/* monitor gadgets at the screen edge */
.gadget {
    position: absolute;
    right: 0;
    width: 7px;
    height: 42px;
    border: 2px solid #3f4656;
    border-right-width: 1px;
    border-radius: 3px 0 0 3px;
    background: linear-gradient(#555d6b 15%, #c9a24a 25%, #6cab74 50%, #2d8ea5 75%, #3f5a78);
}
.gadget.upper {
    top: 272px;
}
.gadget.lower {
    bottom: 8px;
}

/* overlays */
.watermark {
    position: absolute;
    right: 46px;
    bottom: 18px;
    opacity: 0.85;
}
.wm-name {
    font: bold 38px "Liberation Sans", sans-serif;
}
.wm-cn {
    font: bold 30px "Noto Sans CJK SC", sans-serif;
}
.wm-url {
    font: 21px "Open Sans", sans-serif;
}
.wm-du {
    font: bold 24px "Liberation Sans", sans-serif;
    fill: #a9a7aa;
}
.arrows {
    position: absolute;
    left: 0;
    top: 0;
    pointer-events: none;
}
```
